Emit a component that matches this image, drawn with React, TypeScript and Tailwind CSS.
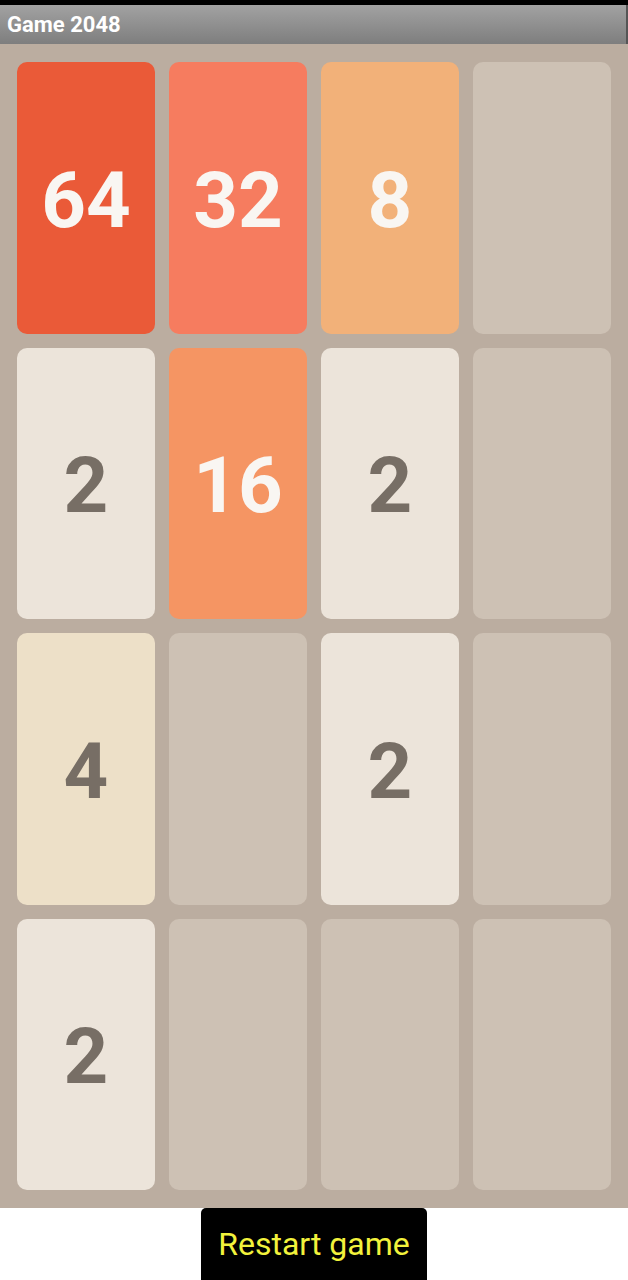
import React from 'react';

type Tile = number | null;

const board: Tile[][] = [
  [64, 32, 8, null],
  [2, 16, 2, null],
  [4, null, 2, null],
  [2, null, null, null],
];

// tile background + text colour by value
function tileClass(v: Tile) {
  switch (v) {
    case 2:
      return 'bg-[#ece4da] text-[#776e65]';
    case 4:
      return 'bg-[#ede0c8] text-[#776e65]';
    case 8:
      return 'bg-[#f2b179] text-[#f9f6f2]';
    case 16:
      return 'bg-[#f59563] text-[#f9f6f2]';
    case 32:
      return 'bg-[#f67c5f] text-[#f9f6f2]';
    case 64:
      return 'bg-[#ea5a38] text-[#f9f6f2]';
    default:
      return 'bg-[#cdc1b4]';
  }
}

export default function App() {
  return (
    <div className="w-[628px] h-[1280px] bg-white flex flex-col overflow-hidden font-['Roboto',sans-serif]">
      {/* status strip */}
      <div className="h-[5px] shrink-0 bg-black" />

      {/* title bar */}
      <div className="h-[39px] shrink-0 flex items-center px-[7px] bg-gradient-to-b from-[#a2a2a2] to-[#7e7e7e] border-r-2 border-[#555]">
        <span className="text-white font-bold text-[22px] leading-none pt-[1px]">Game 2048</span>
      </div>

      {/* board */}
      <div className="h-[1164px] shrink-0 bg-[#bbada0] px-[17px] py-[18px] grid grid-cols-4 grid-rows-4 gap-x-[14px] gap-y-[14px]">
        {board.flat().map((v, i) => (
          <div
            key={i}
            className={`rounded-[10px] flex items-center justify-center font-bold text-[78px] leading-none pt-[6px] ${tileClass(v)}`}
          >
            {v ?? ''}
          </div>
        ))}
      </div>

      {/* restart */}
      <div className="flex justify-center">
        <button className="w-[226px] h-[76px] shrink-0 bg-black rounded-[5px] text-[#f2f23c] text-[32px] pb-[4px]">
          Restart game
        </button>
      </div>
    </div>
  );
}
